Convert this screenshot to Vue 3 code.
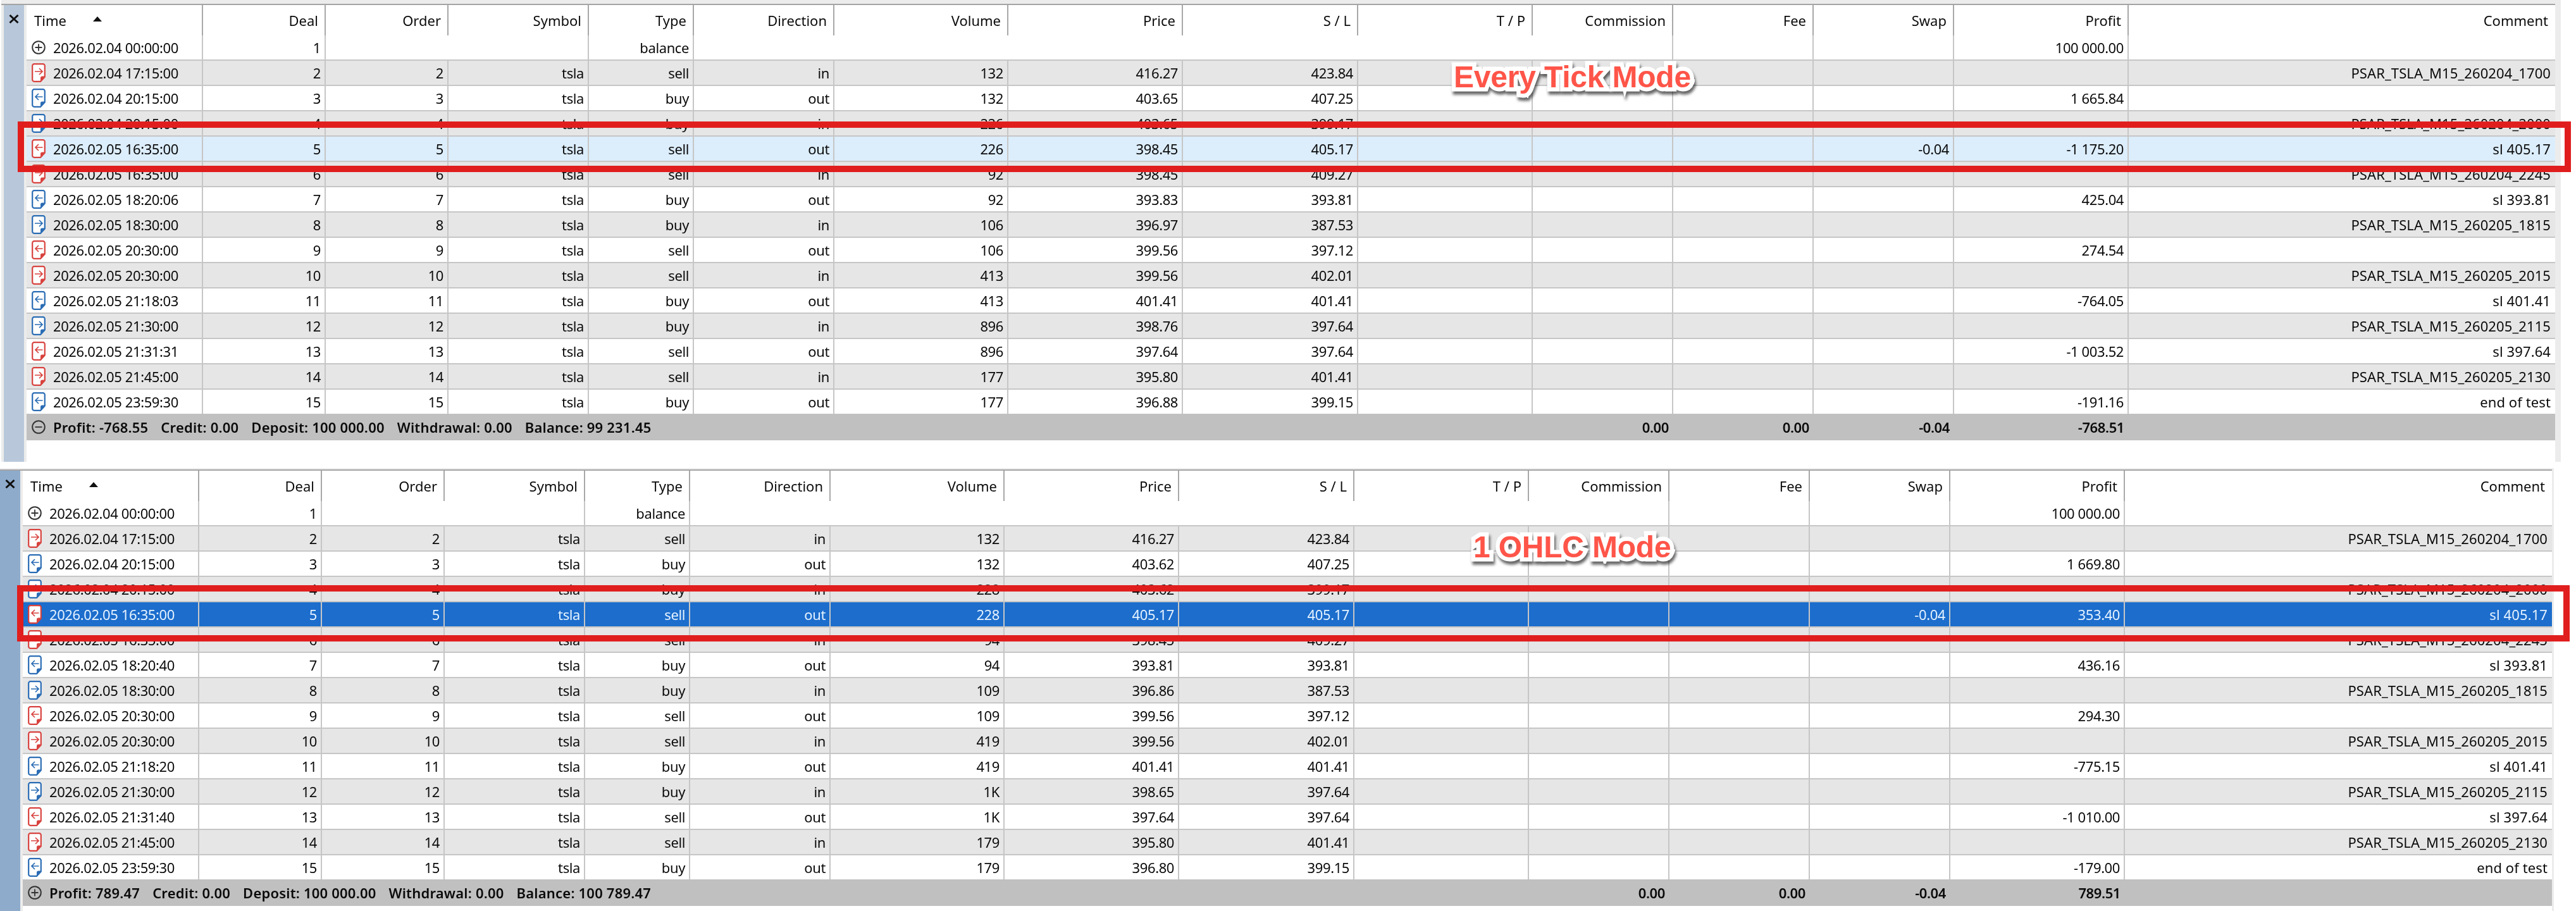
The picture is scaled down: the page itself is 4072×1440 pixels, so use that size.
<script setup>
const headers = ['Time','Deal','Order','Symbol','Type','Direction','Volume','Price','S / L','T / P','Commission','Fee','Swap','Profit','Comment']
const openSep = [1,1,0,1,1,0,0,0,0,0,1,1,1,1,1]
const d = (t,n,type,dir,vol,price,sl,swap,profit,comment) => [t,String(n),String(n),'tsla',type,dir,vol,price,sl,'','','',swap,profit,comment]
const panels = [
  { key:'a', sel:'sel-light', sumIcon:'minus', label:'Every Tick Mode',
    summary:['Profit: -768.55','Credit: 0.00','Deposit: 100 000.00','Withdrawal: 0.00','Balance: 99 231.45'],
    totals:['0.00','0.00','-0.04','-768.51'],
    rows:[
      d('2026.02.04 17:15:00',2,'sell','in','132','416.27','423.84','','','PSAR_TSLA_M15_260204_1700'),
      d('2026.02.04 20:15:00',3,'buy','out','132','403.65','407.25','','1 665.84',''),
      d('2026.02.04 20:15:00',4,'buy','in','226','403.65','399.17','','','PSAR_TSLA_M15_260204_2000'),
      d('2026.02.05 16:35:00',5,'sell','out','226','398.45','405.17','-0.04','-1 175.20','sl 405.17'),
      d('2026.02.05 16:35:00',6,'sell','in','92','398.45','409.27','','','PSAR_TSLA_M15_260204_2245'),
      d('2026.02.05 18:20:06',7,'buy','out','92','393.83','393.81','','425.04','sl 393.81'),
      d('2026.02.05 18:30:00',8,'buy','in','106','396.97','387.53','','','PSAR_TSLA_M15_260205_1815'),
      d('2026.02.05 20:30:00',9,'sell','out','106','399.56','397.12','','274.54',''),
      d('2026.02.05 20:30:00',10,'sell','in','413','399.56','402.01','','','PSAR_TSLA_M15_260205_2015'),
      d('2026.02.05 21:18:03',11,'buy','out','413','401.41','401.41','','-764.05','sl 401.41'),
      d('2026.02.05 21:30:00',12,'buy','in','896','398.76','397.64','','','PSAR_TSLA_M15_260205_2115'),
      d('2026.02.05 21:31:31',13,'sell','out','896','397.64','397.64','','-1 003.52','sl 397.64'),
      d('2026.02.05 21:45:00',14,'sell','in','177','395.80','401.41','','','PSAR_TSLA_M15_260205_2130'),
      d('2026.02.05 23:59:30',15,'buy','out','177','396.88','399.15','','-191.16','end of test'),
    ]},
  { key:'b', sel:'sel-dark', sumIcon:'plus', label:'1 OHLC Mode',
    summary:['Profit: 789.47','Credit: 0.00','Deposit: 100 000.00','Withdrawal: 0.00','Balance: 100 789.47'],
    totals:['0.00','0.00','-0.04','789.51'],
    rows:[
      d('2026.02.04 17:15:00',2,'sell','in','132','416.27','423.84','','','PSAR_TSLA_M15_260204_1700'),
      d('2026.02.04 20:15:00',3,'buy','out','132','403.62','407.25','','1 669.80',''),
      d('2026.02.04 20:15:00',4,'buy','in','228','403.62','399.17','','','PSAR_TSLA_M15_260204_2000'),
      d('2026.02.05 16:35:00',5,'sell','out','228','405.17','405.17','-0.04','353.40','sl 405.17'),
      d('2026.02.05 16:35:00',6,'sell','in','94','398.45','409.27','','','PSAR_TSLA_M15_260204_2245'),
      d('2026.02.05 18:20:40',7,'buy','out','94','393.81','393.81','','436.16','sl 393.81'),
      d('2026.02.05 18:30:00',8,'buy','in','109','396.86','387.53','','','PSAR_TSLA_M15_260205_1815'),
      d('2026.02.05 20:30:00',9,'sell','out','109','399.56','397.12','','294.30',''),
      d('2026.02.05 20:30:00',10,'sell','in','419','399.56','402.01','','','PSAR_TSLA_M15_260205_2015'),
      d('2026.02.05 21:18:20',11,'buy','out','419','401.41','401.41','','-775.15','sl 401.41'),
      d('2026.02.05 21:30:00',12,'buy','in','1K','398.65','397.64','','','PSAR_TSLA_M15_260205_2115'),
      d('2026.02.05 21:31:40',13,'sell','out','1K','397.64','397.64','','-1 010.00','sl 397.64'),
      d('2026.02.05 21:45:00',14,'sell','in','179','395.80','401.41','','','PSAR_TSLA_M15_260205_2130'),
      d('2026.02.05 23:59:30',15,'buy','out','179','396.80','399.15','','-179.00','end of test'),
    ]},
]
const firstRow = ['2026.02.04 00:00:00','1','','','balance','','','','','','','','','100 000.00','']
</script>

<template>
  <div class="sheet">
    <section v-for="p in panels" :key="p.key" class="panel" :class="'panel-' + p.key">
      <div class="inner">
        <aside class="strip">
          <svg class="close" viewBox="0 0 16 14" width="16" height="14"><path d="M1.5 1 14.5 13M14.5 1 1.5 13" fill="none" stroke="#111" stroke-width="3"/></svg>
        </aside>
        <div class="body">
          <div class="grid head">
            <div v-for="(h, i) in headers" :key="h" class="hcell" :class="{ first: i === 0, last: i === 14 }">
              <span>{{ h }}</span>
              <svg v-if="i === 0" class="sort" viewBox="0 0 14 8" width="14" height="8"><path d="M7 0 14 8H0Z" fill="#111"/></svg>
            </div>
          </div>
          <div class="grid row">
            <div v-for="(c, i) in firstRow" :key="i" class="cell" :class="{ first: i === 0, last: i === 14, nosep: !openSep[i] }">
              <svg v-if="i === 0" class="ico" viewBox="0 0 22 22" width="22" height="22"><circle cx="11" cy="11" r="9.8" fill="none" stroke="#333" stroke-width="2"/><path d="M5.5 11h11M11 5.5v11" stroke="#333" stroke-width="1.8"/></svg>
              <span>{{ c }}</span>
            </div>
          </div>
          <div v-for="(r, n) in p.rows" :key="n" class="grid row" :class="[n % 2 === 0 ? 'alt' : '', n === 3 ? p.sel : '']">
            <div v-for="(c, i) in r" :key="i" class="cell" :class="{ first: i === 0, last: i === 14 }">
              <svg v-if="i === 0" class="doc" :class="r[4]" viewBox="0 0 22 30" width="22" height="30">
                <path class="sheetpath" d="M4 1.2H18A2.8 2.8 0 0 1 20.8 4V21.5L14 28.8H4A2.8 2.8 0 0 1 1.2 26V4A2.8 2.8 0 0 1 4 1.2Z"/>
                <path class="fold" d="M20.8 20.5 14 28.8V23Q14 20.5 16.5 20.5Z"/>
                <path v-if="r[5] === 'in'" class="arrow" d="M5 13H16.5M12 8 17 13 12 18"/>
                <path v-else class="arrow" d="M17.5 13H6M11 8 6 13 11 18"/>
              </svg>
              <span>{{ c }}</span>
            </div>
          </div>
          <div class="grid summary">
            <div class="sumtext">
              <svg class="ico" viewBox="0 0 22 22" width="22" height="22">
                <circle cx="11" cy="11" r="9.8" fill="none" stroke="#333" stroke-width="2"/>
                <path :d="p.sumIcon === 'plus' ? 'M5.5 11h11M11 5.5v11' : 'M5.5 11h11'" stroke="#333" stroke-width="1.8"/>
              </svg>
              <span v-for="s in p.summary" :key="s">{{ s }}</span>
            </div>
            <div v-for="(t, i) in p.totals" :key="i" class="total">{{ t }}</div>
          </div>
        </div>
      </div>
      <div class="redbox"></div>
      <div class="mode">{{ p.label }}</div>
    </section>
  </div>
</template>

<style scoped>
.sheet {
  width: 4072px;
  height: 1440px;
  position: relative;
  overflow: hidden;
  background: #fff;
  font-family: "Noto Sans", "Open Sans", sans-serif;
  font-size: 22px;
  letter-spacing: -0.4px;
  color: #0a0a0a;
}
.panel {
  position: relative;
  background: #ececec;
  box-sizing: border-box;
}
.panel-a { margin-left: 2px; width: 4046px; height: 730px; padding: 6px 9px 0 4px; }
.panel-b { margin-top: 10px; width: 4037px; height: 700px; padding: 2px 3px 0 0; }
.inner {
  display: flex;
  height: 100%;
  border-top: 2px solid #a4a4a4;
  box-sizing: border-box;
}
.panel-a .inner { margin-left: -4px; padding-left: 4px; }
.strip { width: 32px; flex: none; margin-right: 4px; padding-top: 15px; box-sizing: border-box; }
.panel-a .strip { background: #b8c8da; padding-left: 8px; }
.panel-b .strip { background: #8eabcc; padding-left: 8px; padding-top: 14px; }
.close { display: block; }
.body { flex: 1; background: #fff; min-width: 0; filter: blur(0.35px); }
.grid {
  display: grid;
  grid-template-columns: 279px 194px 194px 222px 166px 222px 275px 276px 277px 276px 222px 222px 222px 276px 1fr;
}
.head { height: 48px; }
.hcell {
  display: flex;
  align-items: center;
  justify-content: flex-end;
  padding-right: 10px;
  box-sizing: border-box;
  border-right: 2px solid #a8a8a8;
  white-space: nowrap;
  letter-spacing: 0;
}
.hcell.first { justify-content: flex-start; padding-left: 12px; }
.hcell.last { border-right: 0; padding-right: 11px; }
.sort { margin-left: 42px; margin-bottom: 4px; }
.row { height: 40px; border-bottom: 2px solid #c6c6c6; box-sizing: border-box; }
.row:nth-last-child(2) { height: 38px; border-bottom: 0; }
.alt { background: #e6e6e6; }
.sel-light { background: #dcedfb; }
.sel-dark { background: #1c6dcc; color: #e4f2ff; }
.cell {
  display: flex;
  align-items: center;
  justify-content: flex-end;
  padding-right: 6px;
  box-sizing: border-box;
  border-right: 2px solid #c6c6c6;
  white-space: nowrap;
  min-width: 0;
}
.cell.first { justify-content: flex-start; padding-left: 8px; gap: 12px; }
.cell.last { border-right: 0; padding-right: 7px; letter-spacing: 0.1px; }
.cell.nosep { border-right-color: transparent; }
.ico { flex: none; }
.doc { flex: none; }
.sheetpath { fill: #fff; stroke-width: 2.2; }
.fold { stroke: none; }
.arrow { fill: none; stroke-width: 1.7; }
.doc.sell .sheetpath, .doc.sell .arrow { stroke: #d8423e; }
.doc.sell .fold { fill: #d8423e; }
.doc.buy .sheetpath, .doc.buy .arrow { stroke: #2a6cb4; }
.doc.buy .fold { fill: #2a6cb4; }
.summary { height: 42px; background: #c0c0c0; font-weight: 600; align-items: center; }
.sumtext {
  grid-column: 1 / span 10;
  display: flex;
  align-items: center;
  padding-left: 8px;
  gap: 20px;
  white-space: nowrap;
  letter-spacing: 0.2px;
}
.sumtext .ico { margin-right: -8px; }
.total { text-align: right; padding-right: 7px; }
.redbox {
  position: absolute;
  border: 10px solid #e01e1e;
  box-sizing: border-box;
}
.panel-a .redbox { left: 26px; top: 192px; width: 4036px; height: 80px; }
.panel-b .redbox { left: 27px; top: 185px; width: 4035px; height: 89px; }
.mode {
  position: absolute;
  font-family: "Liberation Sans", Arial, sans-serif;
  font-weight: 700;
  font-size: 48px;
  letter-spacing: -0.2px;
  line-height: 56px;
  color: #ff5549;
  white-space: nowrap;
  -webkit-text-stroke: 13px #fff;
  paint-order: stroke fill;
  filter: drop-shadow(2px 5px 2px rgba(0, 0, 0, 0.6));
}
.panel-a .mode { left: 2296px; top: 94px; }
.panel-b .mode { left: 2329px; top: 97px; }
</style>
